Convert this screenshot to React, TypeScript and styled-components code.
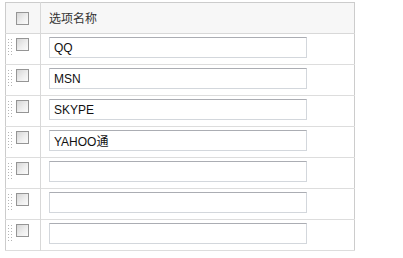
import styled, { createGlobalStyle } from 'styled-components';

const GlobalStyle = createGlobalStyle`
    body {
        margin: 0;
        padding: 2px 5px;
        background: #ffffff;
        font-family: 'Liberation Sans', 'Noto Sans CJK SC', sans-serif;
        font-size: 12px;
        color: #333333;
    }
`;

const Table = styled.table`
    width: 350px;
    border-collapse: collapse;
    border: 1px solid #cccccc;
`;

const HeadRow = styled.tr`
    height: 31px;
    background: #f7f7f7;
    border-bottom: 1px solid #d8d8d8;
`;

const Row = styled.tr`
    height: 31px;
    border-bottom: 1px solid #dddddd;
`;

const SelectCell = styled.td`
    width: 32px;
    padding: 0 0 0 2px;
    border-right: 1px solid #d8d8d8;
    vertical-align: top;
`;

const NameCell = styled.td`
    padding: 0 0 0 8px;
    vertical-align: top;
`;

const HeadTitle = styled.div`
    padding-top: 8px;
    font-size: 12px;
    line-height: 16px;
    color: #333333;
`;

const CellInner = styled.div<{ $head?: boolean }>`
    display: flex;
    align-items: flex-start;
    gap: 4px;
    padding: ${(p) => (p.$head ? '9px 0 0 8px' : '4px 0 0 0')};
`;

const Grip = styled.svg`
    display: block;
    margin-top: 1px;
    flex: none;
`;

const CheckBox = styled.span`
    display: block;
    width: 11px;
    height: 11px;
    border: 1px solid #959595;
    background: linear-gradient(135deg, #d6d6d6 0%, #eeeeee 55%, #fbfbfb 100%);
    flex: none;
`;

const NameInput = styled.input`
    display: block;
    box-sizing: border-box;
    width: 258px;
    height: 21px;
    margin-top: 3px;
    padding: 0 4px;
    border: 1px solid #d3d7dc;
    border-top-color: #abadb3;
    font-family: 'Liberation Sans', 'Noto Sans CJK SC', sans-serif;
    font-size: 12px;
    color: #111111;
    outline: none;
    background: #ffffff;
`;

const GripIcon = () => (
    <Grip width="4" height="16" viewBox="0 0 4 16">
        {[0, 3, 6, 9, 12, 15].map((y) => (
            <g key={y} fill="#b4b4b4">
                <rect x="0" y={y} width="1" height="1" />
                <rect x="3" y={y} width="1" height="1" />
            </g>
        ))}
    </Grip>
);

const options = ['QQ', 'MSN', 'SKYPE', 'YAHOO通', '', '', ''];

export default function App() {
    return (
        <>
            <GlobalStyle />
            <Table>
                <tbody>
                    <HeadRow>
                        <SelectCell>
                            <CellInner $head>
                                <CheckBox />
                            </CellInner>
                        </SelectCell>
                        <NameCell>
                            <HeadTitle>选项名称</HeadTitle>
                        </NameCell>
                    </HeadRow>
                    {options.map((name, i) => (
                        <Row key={i}>
                            <SelectCell>
                                <CellInner>
                                    <GripIcon />
                                    <CheckBox />
                                </CellInner>
                            </SelectCell>
                            <NameCell>
                                <NameInput defaultValue={name} />
                            </NameCell>
                        </Row>
                    ))}
                </tbody>
            </Table>
        </>
    );
}
